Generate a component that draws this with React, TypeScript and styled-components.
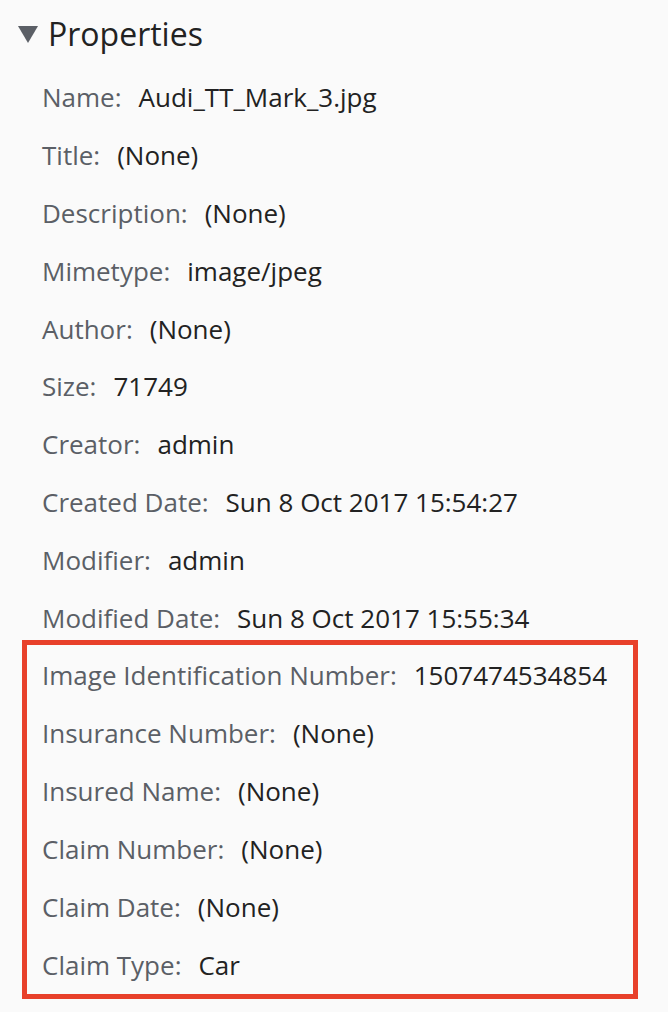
import React, { ReactElement } from 'react';
import styled, { createGlobalStyle } from 'styled-components';

const GlobalStyle = createGlobalStyle`
  html, body {
    margin: 0;
    padding: 0;
    background: #fafafa;
  }
  body {
    font-family: "Open Sans", "Liberation Sans", sans-serif;
  }
`;

const Panel = styled.div`
  padding: 12px 0 0 0;
`;

const Header = styled.div`
  display: flex;
  align-items: center;
  gap: 10px;
  padding-left: 18px;
  height: 42px;
`;

const Caret = styled.span`
  width: 0;
  height: 0;
  border-left: 10px solid transparent;
  border-right: 10px solid transparent;
  border-top: 17px solid #5b5f66;
  margin-top: 2px;
`;

const Title = styled.h2`
  margin: 0;
  font-size: 32px;
  font-weight: 400;
  color: #222;
`;

const List = styled.div`
  display: flex;
  flex-direction: column;
  padding-top: 14px;
`;

const Highlight = styled.div`
  display: flex;
  flex-direction: column;
  margin: -7px 30px 0 22px;
  border: 5px solid #e8402a;
  padding: 1px 0 0;
`;

const Row = styled.div<{ $inset?: boolean }>`
  display: flex;
  align-items: center;
  height: ${(p) => (p.$inset ? '58px' : '57.9px')};
  padding-left: ${(p) => (p.$inset ? '15px' : '42px')};
  font-size: 26px;
  white-space: nowrap;
`;

const Label = styled.span`
  color: #5b5f66;
  margin-right: 17px;
`;

const Value = styled.span`
  color: #222;
`;

const basic: [string, string][] = [
  ['Name', 'Audi_TT_Mark_3.jpg'],
  ['Title', '(None)'],
  ['Description', '(None)'],
  ['Mimetype', 'image/jpeg'],
  ['Author', '(None)'],
  ['Size', '71749'],
  ['Creator', 'admin'],
  ['Created Date', 'Sun 8 Oct 2017 15:54:27'],
  ['Modifier', 'admin'],
  ['Modified Date', 'Sun 8 Oct 2017 15:55:34'],
];

const custom: [string, string][] = [
  ['Image Identification Number', '1507474534854'],
  ['Insurance Number', '(None)'],
  ['Insured Name', '(None)'],
  ['Claim Number', '(None)'],
  ['Claim Date', '(None)'],
  ['Claim Type', 'Car'],
];

const App = (): ReactElement => (
  <>
    <GlobalStyle />
    <Panel>
      <Header>
        <Caret />
        <Title>Properties</Title>
      </Header>
      <List>
        {basic.map(([k, v]) => (
          <Row key={k}>
            <Label>{k}:</Label>
            <Value>{v}</Value>
          </Row>
        ))}
        <Highlight>
          {custom.map(([k, v]) => (
            <Row key={k} $inset>
              <Label>{k}:</Label>
              <Value>{v}</Value>
            </Row>
          ))}
        </Highlight>
      </List>
    </Panel>
  </>
);

export default App;
